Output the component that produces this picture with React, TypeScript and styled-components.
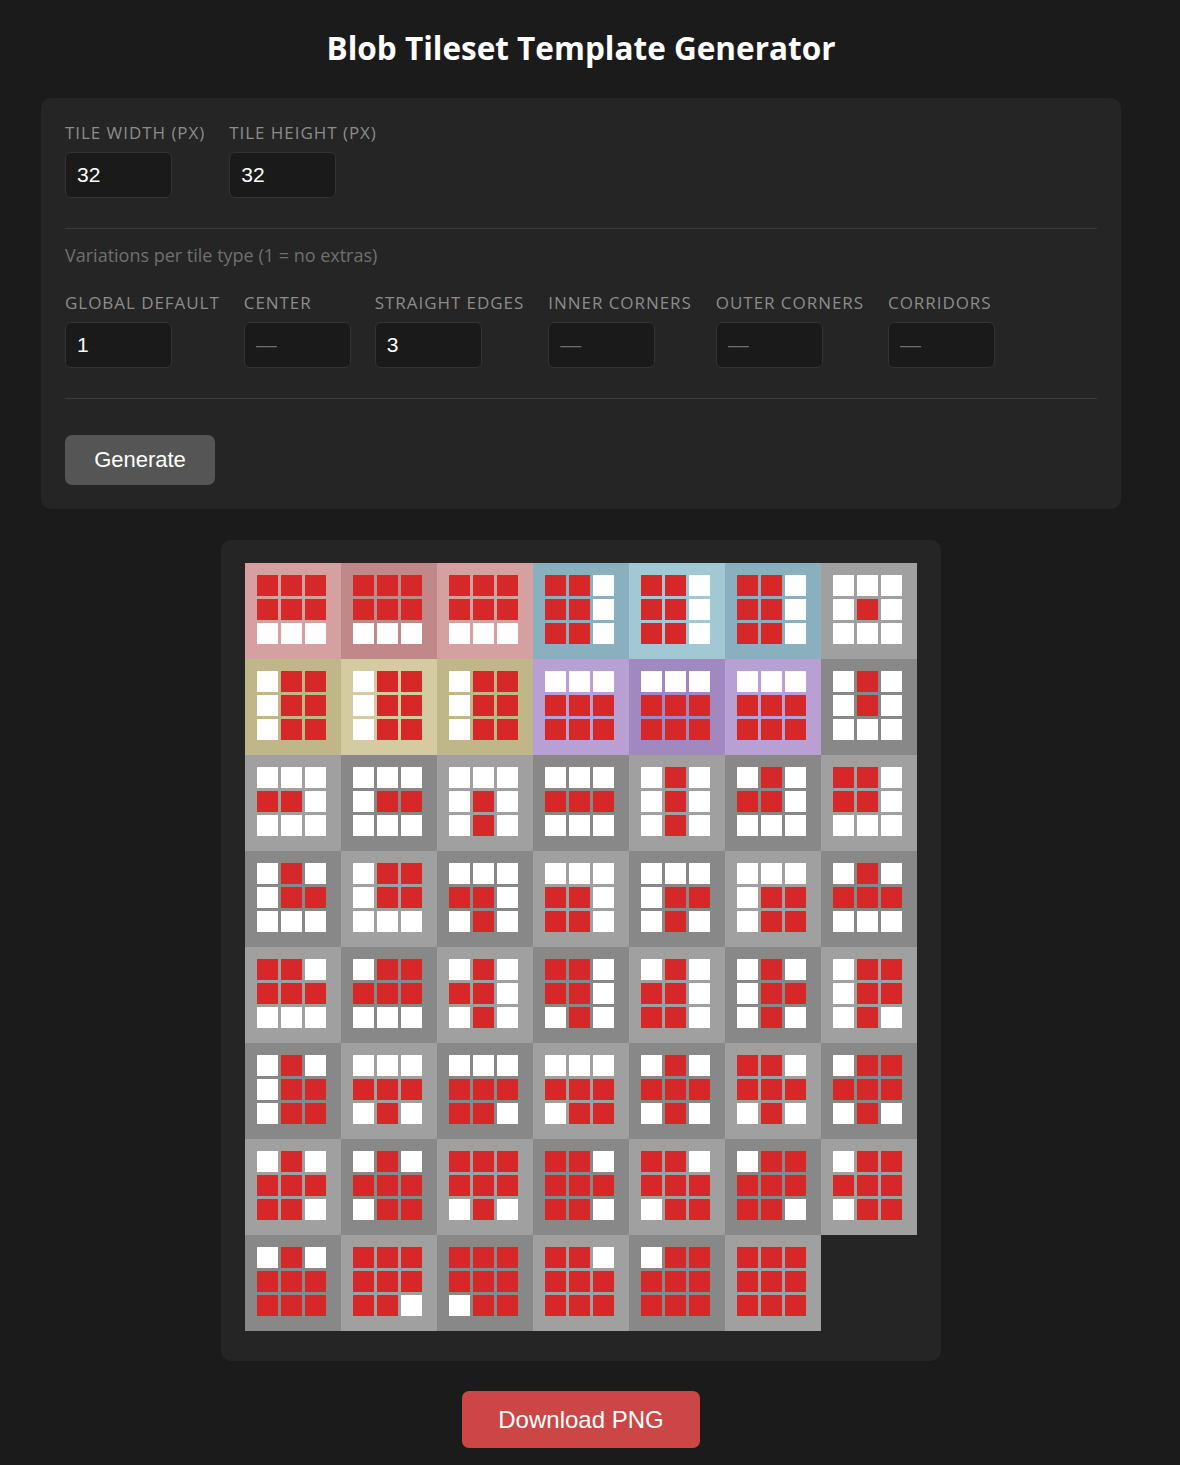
import { useState } from 'react';
import styled, { createGlobalStyle } from 'styled-components';

const GlobalStyle = createGlobalStyle`
  html, body {
    margin: 0;
    padding: 0;
    background: #1b1b1b;
  }
  body {
    font-family: "Open Sans", "Noto Sans", sans-serif;
    color: #eee;
  }
`;

// 3x3 masks per tile, read row by row (1 = filled)
const TILES: string[][] = [
  ['111111000', '111111000', '111111000', '110110110', '110110110', '110110110', '000010000'],
  ['011011011', '011011011', '011011011', '000111111', '000111111', '000111111', '010010000'],
  ['000110000', '000011000', '000010010', '000111000', '010010010', '010110000', '110110000'],
  ['010011000', '011011000', '000110010', '000110110', '000011010', '000011011', '010111000'],
  ['110111000', '011111000', '010110010', '110110010', '010110110', '010011010', '011011010'],
  ['010011011', '000111010', '000111110', '000111011', '010111010', '110111010', '011111010'],
  ['010111110', '010111011', '111111010', '110111110', '110111011', '011111110', '011111011'],
  ['010111111', '111111110', '111111011', '110111111', '011111111', '111111111'],
];

const PALETTE: Record<string, [string, string]> = {
  gray: ['#a0a0a0', '#888888'],
  pink: ['#d4a0a0', '#c08888'],
  blue: ['#a2c8d4', '#8ab0c0'],
  khaki: ['#d4cba1', '#c0b788'],
  purple: ['#b89fd4', '#a288c0'],
};

const tintFor = (row: number, col: number) => {
  if (row === 0 && col < 3) return 'pink';
  if (row === 0 && col < 6) return 'blue';
  if (row === 1 && col < 3) return 'khaki';
  if (row === 1 && col < 6) return 'purple';
  return 'gray';
};

const TILE = 32;
const COLS = 7;

const VARIATIONS = [
  { key: 'global', label: 'Global Default', value: '1' },
  { key: 'center', label: 'Center', value: '' },
  { key: 'straight', label: 'Straight Edges', value: '3' },
  { key: 'inner', label: 'Inner Corners', value: '' },
  { key: 'outer', label: 'Outer Corners', value: '' },
  { key: 'corridors', label: 'Corridors', value: '' },
];

function TilesetPreview() {
  return (
    <Canvas
      viewBox={`0 0 ${COLS * TILE} ${TILES.length * TILE}`}
      width={COLS * TILE * 3}
      height={TILES.length * TILE * 3}
      shapeRendering="crispEdges"
    >
      {TILES.map((row, r) =>
        row.map((mask, c) => {
          const x = c * TILE;
          const y = r * TILE;
          const bg = PALETTE[tintFor(r, c)][(r + c) % 2];
          return (
            <g key={`${r}-${c}`}>
              <rect x={x} y={y} width={TILE} height={TILE} fill={bg} />
              {mask.split('').map((bit, i) => (
                <rect
                  key={i}
                  x={x + 4 + (i % 3) * 8}
                  y={y + 4 + Math.floor(i / 3) * 8}
                  width={7}
                  height={7}
                  fill={bit === '1' ? '#d62828' : '#ffffff'}
                />
              ))}
            </g>
          );
        })
      )}
    </Canvas>
  );
}

export default function App() {
  const [tileWidth, setTileWidth] = useState('32');
  const [tileHeight, setTileHeight] = useState('32');
  const [variations, setVariations] = useState<Record<string, string>>(
    Object.fromEntries(VARIATIONS.map(v => [v.key, v.value]))
  );

  return (
    <Page>
      <GlobalStyle />
      <Title>Blob Tileset Template Generator</Title>
      <Panel>
        <FieldRow>
          <Field>
            <Label>Tile Width (px)</Label>
            <NumberInput type="number" value={tileWidth} onChange={e => setTileWidth(e.target.value)} />
          </Field>
          <Field>
            <Label>Tile Height (px)</Label>
            <NumberInput type="number" value={tileHeight} onChange={e => setTileHeight(e.target.value)} />
          </Field>
        </FieldRow>
        <Divider />
        <Hint>Variations per tile type (1 = no extras)</Hint>
        <FieldRow>
          {VARIATIONS.map(v => (
            <Field key={v.key}>
              <Label>{v.label}</Label>
              <NumberInput
                type="number"
                placeholder="—"
                value={variations[v.key]}
                onChange={e => setVariations({ ...variations, [v.key]: e.target.value })}
              />
            </Field>
          ))}
        </FieldRow>
        <Divider />
        <GenerateButton>Generate</GenerateButton>
      </Panel>
      <PreviewCard>
        <TilesetPreview />
      </PreviewCard>
      <DownloadButton>Download PNG</DownloadButton>
    </Page>
  );
}

const Page = styled.div`
  width: 1162px;
  display: flex;
  flex-direction: column;
  align-items: center;
  padding: 28px 0 18px;
  box-sizing: border-box;
`;

const Title = styled.h1`
  margin: 0 0 30px;
  font-family: "Open Sans", sans-serif;
  font-weight: 700;
  font-size: 31.5px;
  line-height: 40px;
  color: #fff;
`;

const Panel = styled.section`
  width: 1080px;
  box-sizing: border-box;
  padding: 24px;
  background: #252525;
  border-radius: 10px;
`;

const FieldRow = styled.div`
  display: flex;
  gap: 24px;
`;

const Field = styled.div`
  display: flex;
  flex-direction: column;
  gap: 8px;
`;

const Label = styled.label`
  font-size: 17px;
  line-height: 22px;
  text-transform: uppercase;
  letter-spacing: 0.95px;
  color: #8c8c8c;
  white-space: nowrap;
`;

const NumberInput = styled.input`
  width: 107px;
  height: 46px;
  box-sizing: border-box;
  padding: 0 11px;
  background: #1a1a1a;
  border: 1px solid #333;
  border-radius: 6px;
  color: #fff;
  font-family: "Liberation Sans", Arial, sans-serif;
  font-size: 21px;
  outline: none;
  -moz-appearance: textfield;

  &::-webkit-outer-spin-button,
  &::-webkit-inner-spin-button {
    -webkit-appearance: none;
    margin: 0;
  }
  &::placeholder {
    color: #6e6e6e;
  }
`;

const Divider = styled.hr`
  margin: 30px 0 0;
  border: 0;
  border-top: 1px solid #3a3a3a;
`;

const Hint = styled.p`
  margin: 15px 0 26px;
  font-size: 18px;
  line-height: 22px;
  color: #6f6f6f;
`;

const GenerateButton = styled.button`
  margin-top: 36px;
  width: 150px;
  height: 50px;
  background: #555;
  color: #fff;
  border: 0;
  border-radius: 7px;
  font-family: "Liberation Sans", Arial, sans-serif;
  font-size: 22px;
  cursor: pointer;
`;

const PreviewCard = styled.div`
  margin-top: 31px;
  padding: 23px 24px 30px;
  background: #252525;
  border-radius: 10px;
`;

const Canvas = styled.svg`
  display: block;
`;

const DownloadButton = styled.button`
  margin-top: 30px;
  width: 238px;
  height: 57px;
  background: #cc4646;
  color: #fff;
  border: 0;
  border-radius: 7px;
  font-family: "Liberation Sans", Arial, sans-serif;
  font-size: 24px;
  cursor: pointer;
`;
